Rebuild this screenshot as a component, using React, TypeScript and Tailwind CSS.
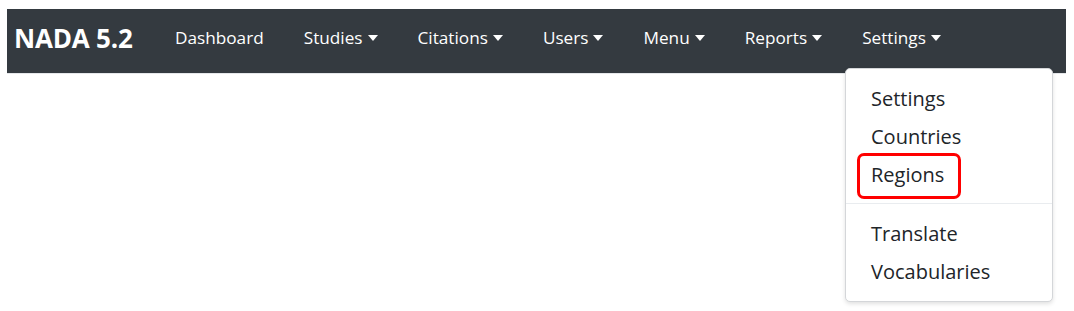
import { useState } from 'react';

const navItems = [
  { label: 'Dashboard', dropdown: false },
  { label: 'Studies', dropdown: true },
  { label: 'Citations', dropdown: true },
  { label: 'Users', dropdown: true },
  { label: 'Menu', dropdown: true },
  { label: 'Reports', dropdown: true },
  { label: 'Settings', dropdown: true },
];

function Caret() {
  return (
    <span className="ml-[5px] inline-block h-0 w-0 border-x-[5px] border-t-[6px] border-x-transparent border-t-white align-middle" />
  );
}

export default function App() {
  const [open] = useState('Settings');

  return (
    <div className="relative h-[311px] w-[1074px] bg-white pt-[9px] pl-[7px]" style={{ fontFamily: '"Open Sans", "Noto Sans", sans-serif' }}>
      <nav className="flex h-[64px] w-[1059px] items-center bg-[#343a40] pb-[6px] text-white">
        <div className="flex h-full w-[148px] items-center pl-[7px] text-[26px] font-bold tracking-[-0.2px]">NADA 5.2</div>
        <ul className="flex h-full items-center">
          {navItems.map((item) => (
            <li key={item.label} className="relative flex h-full items-center px-[20px] text-[17.2px]">
              <span>{item.label}</span>
              {item.dropdown && <Caret />}
            </li>
          ))}
        </ul>
      </nav>
      <div className="h-px w-[1059px] bg-[#e5e7ea]" />

      {open === 'Settings' && (
        <div className="absolute left-[845px] top-[68px] w-[208px] rounded-[5px] border border-[#d4d6d9] bg-white pt-[11px] pb-[10px] text-[20px] text-[#212529] shadow-[0_2px_4px_rgba(0,0,0,0.12)]">
          <div className="flex h-[38px] items-center pl-[25px]">Settings</div>
          <div className="flex h-[38px] items-center pl-[25px]">Countries</div>
          <div className="relative flex h-[38px] items-center pl-[25px]">
            Regions
            <span className="absolute left-[11px] top-[-3px] h-[46px] w-[104px] rounded-[7px] border-[3px] border-[#ff0000]" />
          </div>
          <div className="mt-[9px] mb-[11px] h-px bg-[#e9ecef]" />
          <div className="flex h-[38px] items-center pl-[25px]">Translate</div>
          <div className="flex h-[38px] items-center pl-[25px]">Vocabularies</div>
        </div>
      )}
    </div>
  );
}
